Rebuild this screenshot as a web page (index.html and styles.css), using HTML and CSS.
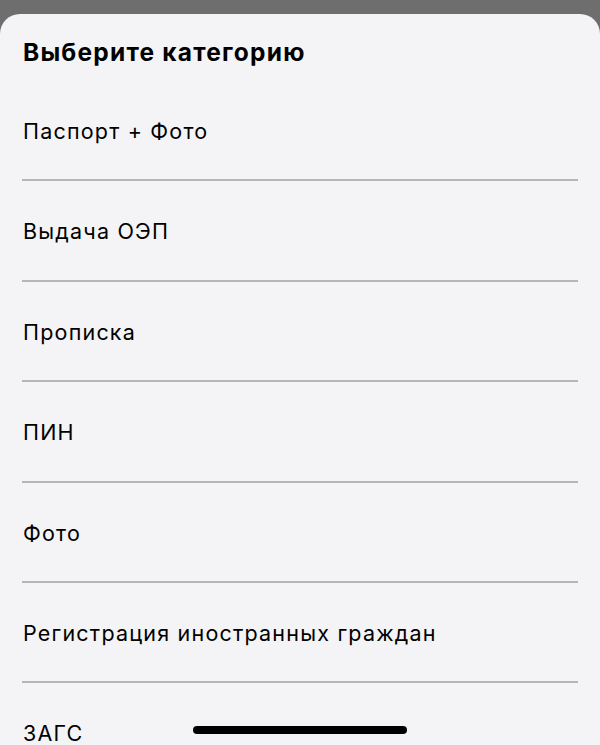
FILE: index.html
```html
<!DOCTYPE html>
<html lang="ru">
<head>
<meta charset="utf-8">
<link rel="stylesheet" href="styles.css">
</head>
<body>
<div class="sheet">
  <h1 class="title">Выберите категорию</h1>
  <ul class="list">
    <li class="row">Паспорт + Фото</li>
    <li class="row">Выдача ОЭП</li>
    <li class="row">Прописка</li>
    <li class="row">ПИН</li>
    <li class="row">Фото</li>
    <li class="row">Регистрация иностранных граждан</li>
    <li class="row">ЗАГС</li>
  </ul>
  <div class="home-indicator"></div>
</div>
</body>
</html>
```
FILE: styles.css
```css
html, body {
  margin: 0;
  padding: 0;
  background: #6e6e6e;
  overflow: hidden;
}
.sheet {
  position: relative;
  margin-top: 14px;
  height: 731px;
  background: #f4f4f6;
  border-radius: 20px 20px 0 0;
  overflow: hidden;
  font-family: Inter, "Noto Sans", sans-serif;
  color: #000;
}
.title {
  margin: 0 0 14px;
  padding: 23px 23px 0;
  font-size: 24.5px;
  line-height: 30px;
  font-weight: 700;
  letter-spacing: 1.2px;
}
.list {
  list-style: none;
  margin: 0;
  padding: 0 22px;
}
.row {
  padding: 37px 0 35.4px 1px;
  border-bottom: 2px solid #b5b5b5;
  font-size: 21.5px;
  line-height: 26px;
  letter-spacing: 1.2px;
  white-space: nowrap;
}
.home-indicator {
  position: absolute;
  left: 193px;
  top: 712px;
  width: 214px;
  height: 8px;
  border-radius: 4px;
  background: #000;
}
```
